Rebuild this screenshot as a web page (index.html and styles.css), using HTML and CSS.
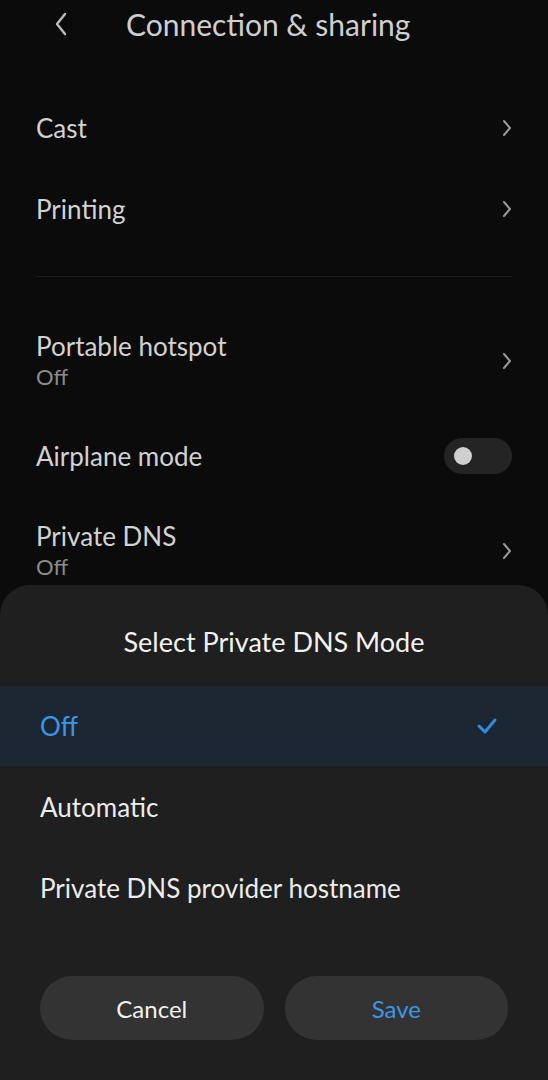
FILE: index.html
```html
<!DOCTYPE html>
<html lang="en">
<head>
    <meta charset="UTF-8">
    <meta name="viewport" content="width=device-width, initial-scale=1.0">
    <title>Connection &amp; sharing</title>
    <link rel="stylesheet" href="styles.css">
</head>
<body>
    <div class="screen">
        <!-- Header -->
        <div class="header">
            <svg class="back" width="14" height="24" viewBox="0 0 14 24">
                <path d="M11 2 L3 12 L11 22" fill="none" stroke="#bdbdbd" stroke-width="2.4" stroke-linecap="round" stroke-linejoin="round"/>
            </svg>
            <span class="title">Connection &amp; sharing</span>
        </div>

        <!-- Settings list -->
        <div class="list">
            <div class="row">
                <div class="label"><span class="name">Cast</span></div>
                <svg class="chev" width="10" height="18" viewBox="0 0 10 18"><path d="M2 2 L8 9 L2 16" fill="none" stroke="#9a9a9a" stroke-width="2" stroke-linecap="round" stroke-linejoin="round"/></svg>
            </div>
            <div class="row">
                <div class="label"><span class="name">Printing</span></div>
                <svg class="chev" width="10" height="18" viewBox="0 0 10 18"><path d="M2 2 L8 9 L2 16" fill="none" stroke="#9a9a9a" stroke-width="2" stroke-linecap="round" stroke-linejoin="round"/></svg>
            </div>

            <div class="divider"></div>

            <div class="row tall">
                <div class="label"><span class="name">Portable hotspot</span><span class="sub">Off</span></div>
                <svg class="chev" width="10" height="18" viewBox="0 0 10 18"><path d="M2 2 L8 9 L2 16" fill="none" stroke="#9a9a9a" stroke-width="2" stroke-linecap="round" stroke-linejoin="round"/></svg>
            </div>
            <div class="row tall">
                <div class="label"><span class="name">Airplane mode</span></div>
                <div class="toggle"><div class="knob"></div></div>
            </div>
            <div class="row tall">
                <div class="label"><span class="name">Private DNS</span><span class="sub">Off</span></div>
                <svg class="chev" width="10" height="18" viewBox="0 0 10 18"><path d="M2 2 L8 9 L2 16" fill="none" stroke="#9a9a9a" stroke-width="2" stroke-linecap="round" stroke-linejoin="round"/></svg>
            </div>
        </div>

        <!-- Bottom sheet -->
        <div class="sheet">
            <div class="sheet-title">Select Private DNS Mode</div>
            <div class="option selected">
                <span>Off</span>
                <svg width="22" height="18" viewBox="0 0 22 18"><path d="M3 9 L9 15 L19 3" fill="none" stroke="#2d8ee0" stroke-width="3" stroke-linecap="round" stroke-linejoin="round"/></svg>
            </div>
            <div class="option"><span>Automatic</span></div>
            <div class="option"><span>Private DNS provider hostname</span></div>
            <div class="buttons">
                <button class="btn">Cancel</button>
                <button class="btn save">Save</button>
            </div>
        </div>
    </div>
</body>
</html>
```

FILE: styles.css
```css
* {
    box-sizing: border-box;
}

body {
    margin: 0;
    background-color: #0b0b0b;
    font-family: Lato, "Open Sans", sans-serif;
    color: #d4d4d4;
}

.screen {
    width: 548px;
    height: 1080px;
    display: flex;
    flex-direction: column;
    overflow: hidden;
}

.header {
    height: 48px;
    flex-shrink: 0;
    display: flex;
    align-items: center;
    padding-left: 54px;
}

.back {
    margin-right: 58px;
}

.title {
    font-size: 30px;
    color: #cfcfcf;
}

/* the sheet covers the bottom of the list */
.list {
    height: 537px;
    flex-shrink: 0;
    padding: 39px 36px 0 36px;
}

.row {
    height: 81px;
    display: flex;
    align-items: center;
    justify-content: space-between;
}

.row.tall {
    height: 95px;
}

.label {
    display: flex;
    flex-direction: column;
}

.name {
    font-size: 26px;
    line-height: 32px;
    color: #d2d2d2;
}

.sub {
    font-size: 22px;
    line-height: 30px;
    color: #8c8c8c;
}

.divider {
    height: 1px;
    background-color: #1c1c1c;
    margin: 27px 0 36px 0;
}

.toggle {
    width: 68px;
    height: 36px;
    border-radius: 18px;
    background-color: #242424;
    display: flex;
    align-items: center;
    padding-left: 10px;
}

.knob {
    width: 18px;
    height: 18px;
    border-radius: 50%;
    background-color: #cfcfcf;
}

.sheet {
    margin-top: auto;
    height: 495px;
    flex-shrink: 0;
    background-color: #1f1f1f;
    border-radius: 30px 30px 0 0;
    display: flex;
    flex-direction: column;
}

.sheet-title {
    height: 101px;
    display: flex;
    align-items: center;
    justify-content: center;
    font-size: 27px;
    color: #f2f2f2;
    padding-top: 12px;
}

.option {
    height: 81px;
    display: flex;
    align-items: center;
    justify-content: space-between;
    padding: 0 50px 0 40px;
    font-size: 26px;
    color: #ececec;
}

.option.selected {
    height: 80px;
    background-color: #1d2733;
    color: #3a97e6;
}

.buttons {
    display: flex;
    gap: 21px;
    padding: 48px 40px 0 40px;
}

.btn {
    flex: 1;
    height: 64px;
    border: none;
    border-radius: 32px;
    background-color: #333333;
    color: #f0f0f0;
    font-family: Lato, "Open Sans", sans-serif;
    font-size: 24px;
}

.btn.save {
    color: #3a97e6;
}
```
